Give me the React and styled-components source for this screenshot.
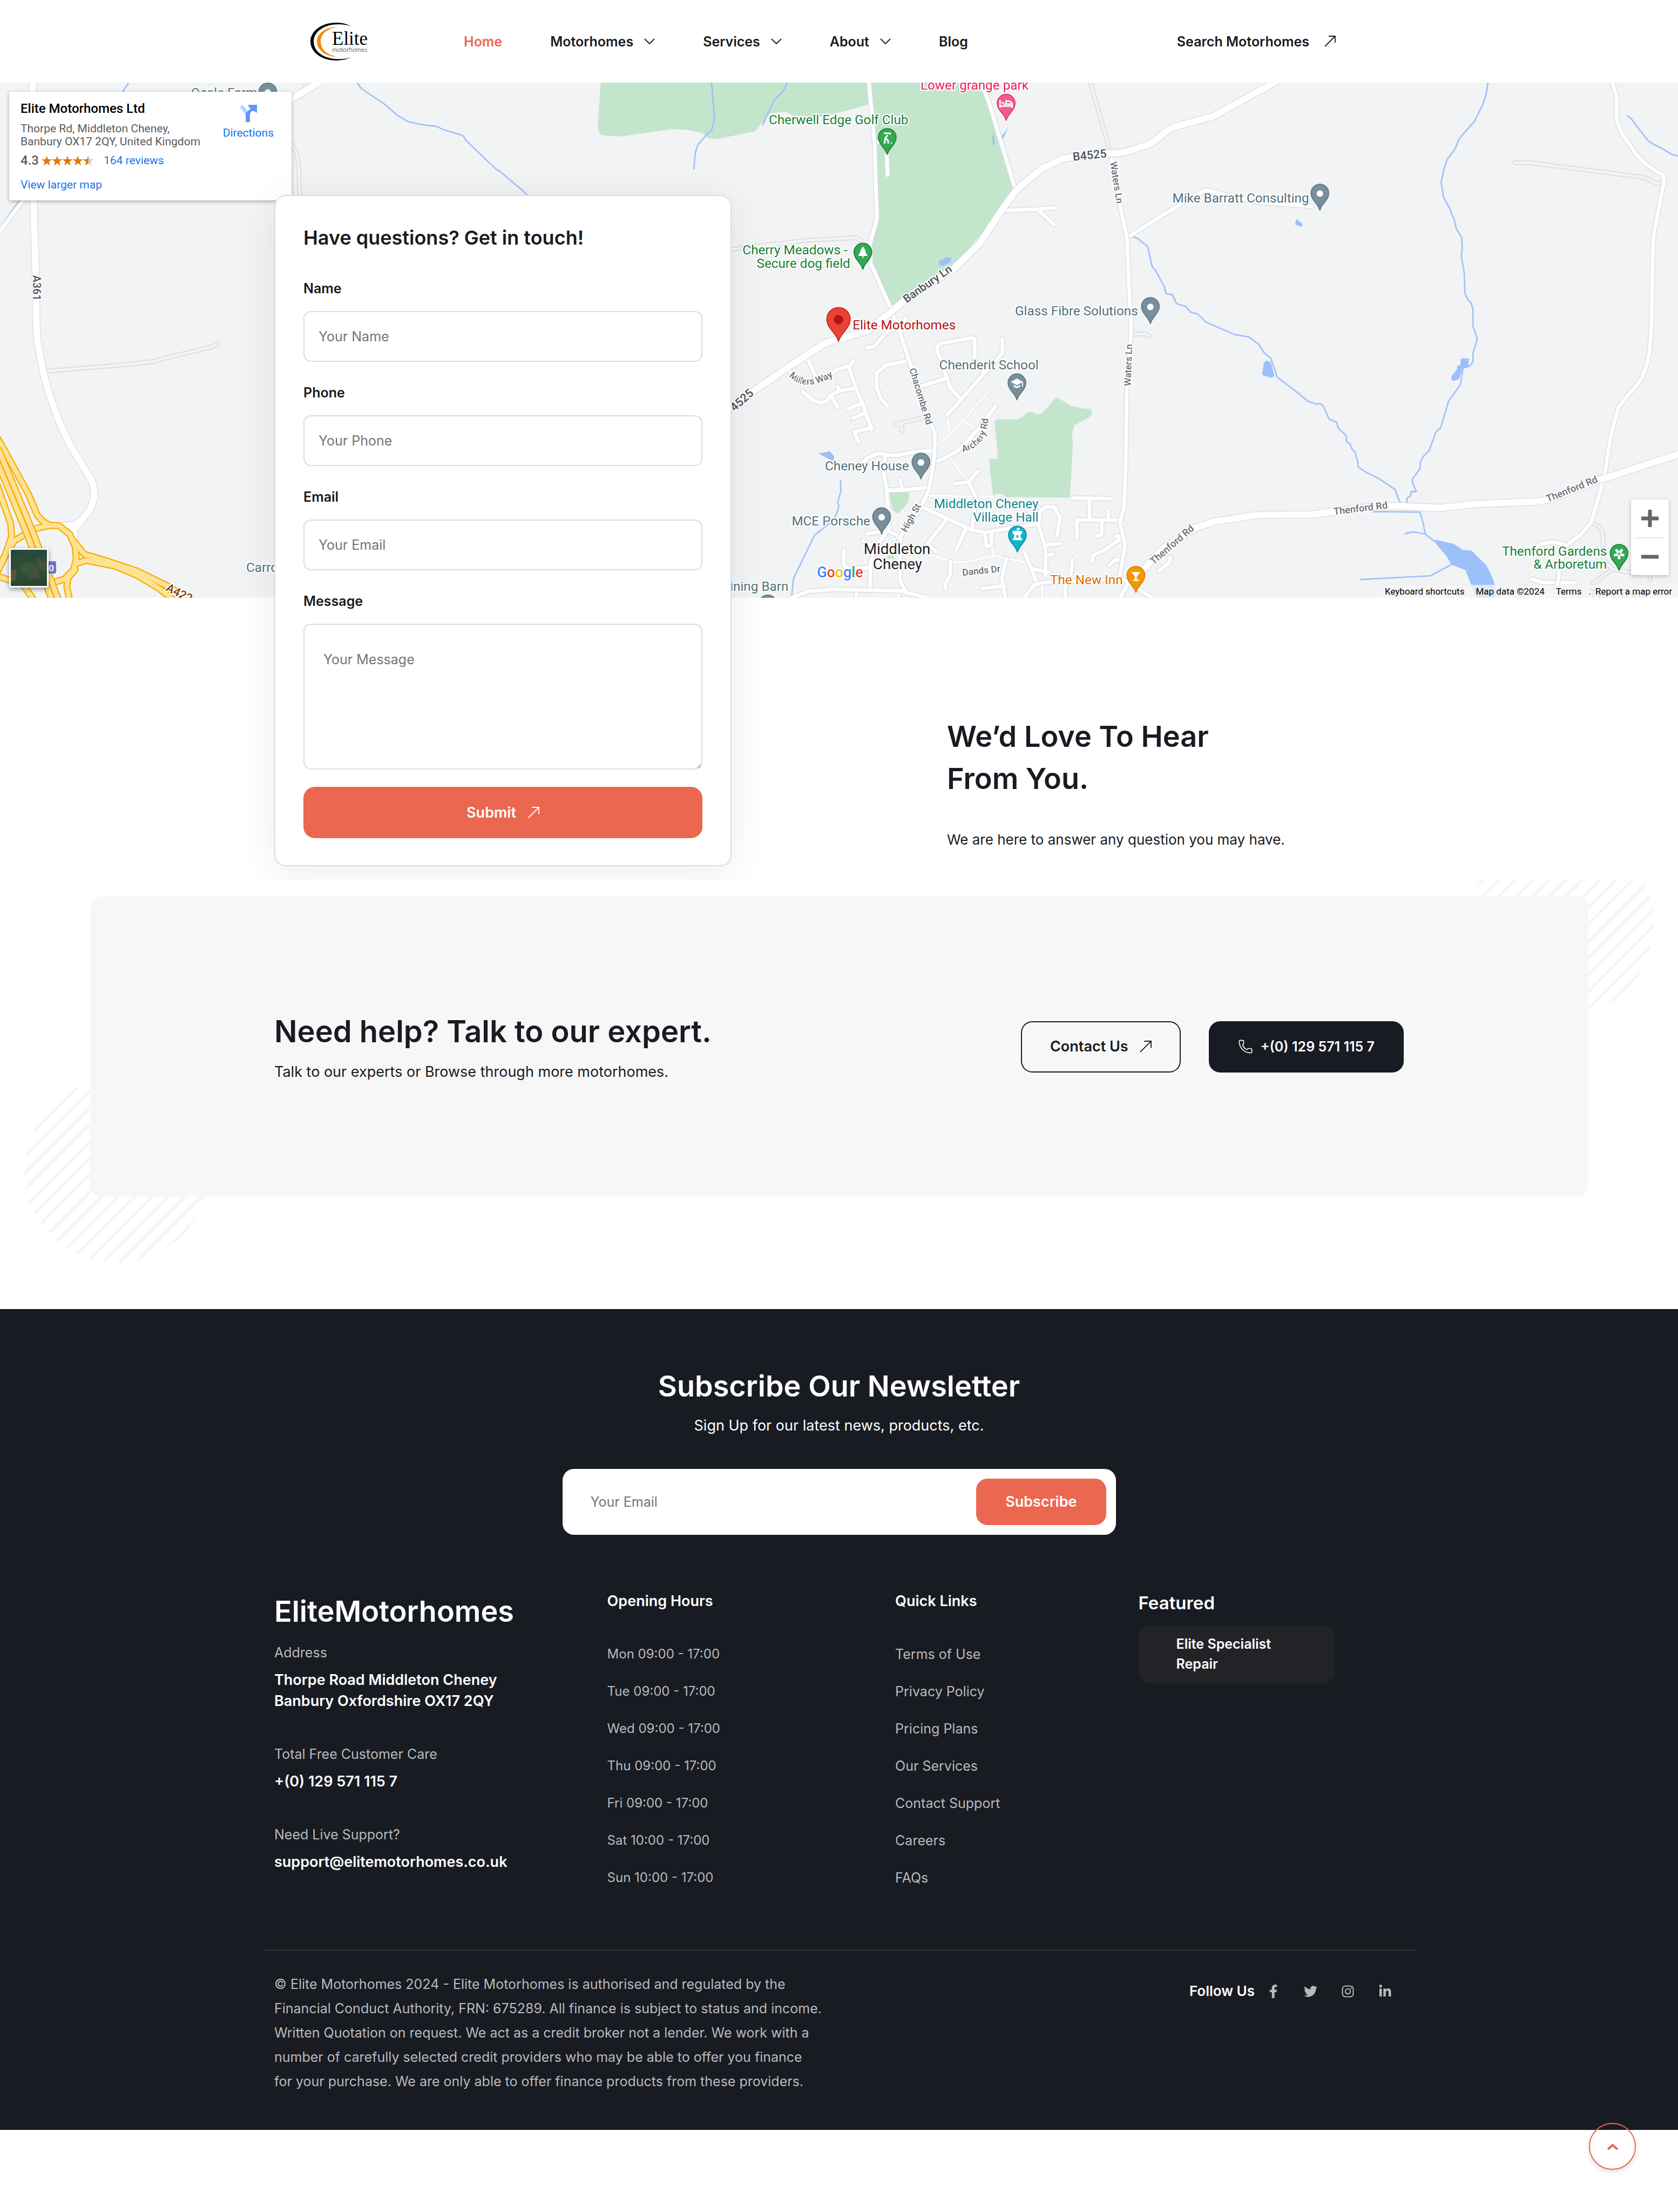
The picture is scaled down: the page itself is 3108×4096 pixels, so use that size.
import React from "react";
import styled, { createGlobalStyle, css } from "styled-components";
import { Phone } from "lucide-react";
import { FaFacebookF, FaTwitter, FaInstagram, FaLinkedinIn } from "react-icons/fa";

const ink = "#181b22";
const coral = "#ec6750";
const muted = "#b9babc";
const line = "#dcdcde";
const sans = `Inter, "Open Sans", sans-serif`;
const mapSans = `Roboto, "Liberation Sans", sans-serif`;

const GlobalStyle = createGlobalStyle`
  *, *::before, *::after { box-sizing: border-box; }
  body { margin: 0; background: #fff; color: ${ink}; font-family: ${sans}; font-size: 25px; line-height: 40px; }
  h1, h2, h3, h4, p, ul, dl, dd { margin: 0; padding: 0; }
  ul { list-style: none; }
  a { color: inherit; text-decoration: none; }
  button, input, textarea { font: inherit; color: inherit; }
  button { cursor: pointer; border: 0; }
`;

const Page = styled.div`
  min-height: 100vh;
`;

const Container = styled.div`
  width: 100%;
  max-width: 2136px;
  margin: 0 auto;
  padding: 0 22px;
`;

/* ---------- header ---------- */

const Header = styled.header`
  background: #fff;
`;

const HeaderBar = styled(Container)`
  display: flex;
  align-items: center;
  height: 153px;
  padding: 0 148px 0 89px;
`;

const LogoLink = styled.a`
  display: block;
  margin-right: 178px;
  svg { display: block; }
`;

const Nav = styled.nav`
  display: flex;
  gap: 89px;
`;

const NavLink = styled.a`
  display: inline-flex;
  align-items: center;
  gap: 20px;
  font-size: 25px;
  font-weight: 600;
  color: ${(p) => (p.$active ? coral : ink)};
`;

const SearchLink = styled.a`
  display: inline-flex;
  align-items: center;
  gap: 28px;
  margin-left: auto;
  font-weight: 600;
`;

/* ---------- contact + map ---------- */

const Contact = styled.section`
  display: grid;
  overflow: hidden;
`;

const MapFrame = styled.div`
  grid-area: 1 / 1;
  align-self: start;
  position: relative;
  height: 954px;
  overflow: hidden;
  background: #f1f3f4;
  font-family: ${mapSans};
`;

const MapCanvas = styled.svg`
  display: block;
  width: 100%;
  height: 100%;
  font-family: ${mapSans};
`;

const PlaceCard = styled.aside`
  position: absolute;
  top: 17px;
  left: 17px;
  display: flex;
  justify-content: space-between;
  width: 523px;
  height: 201px;
  padding: 16px 33px 10px 21px;
  background: #fff;
  border-radius: 3px;
  box-shadow: 0 2px 7px rgba(0, 0, 0, 0.3);
  font-size: 21px;
  line-height: 24px;
  color: #5b5b5b;
  a { color: #1a73e8; }
`;

const PlaceTitle = styled.h2`
  margin-bottom: 10px;
  font-size: 24px;
  line-height: 30px;
  font-weight: 500;
  color: #000;
`;

const Rating = styled.div`
  display: flex;
  align-items: center;
  gap: 5px;
  margin: 8px 0 18px;
  font-size: 24px;
  line-height: 30px;
  font-weight: 500;
  svg { display: block; }
  a { margin-left: 14px; font-size: 21px; font-weight: 400; }
`;

const Directions = styled.a`
  display: flex;
  flex-direction: column;
  align-items: center;
  align-self: flex-start;
  gap: 8px;
  padding-top: 8px;
`;

const Satellite = styled.button`
  position: absolute;
  left: 17px;
  bottom: 19px;
  width: 73px;
  height: 73px;
  padding: 0;
  border: 3px solid #fff;
  border-radius: 4px;
  overflow: hidden;
  box-shadow: 0 3px 8px rgba(0, 0, 0, 0.4);
  svg { display: block; }
`;

const ZoomBox = styled.div`
  position: absolute;
  right: 17px;
  bottom: 42px;
  display: flex;
  flex-direction: column;
  align-items: center;
  width: 70px;
  background: #fff;
  border-radius: 3px;
  box-shadow: 0 2px 7px rgba(0, 0, 0, 0.25);
`;

const ZoomButton = styled.button`
  display: grid;
  place-items: center;
  width: 52px;
  height: 70px;
  padding: 0;
  background: none;
  & + & { border-top: 2px solid #e6e6e6; }
`;

const Attribution = styled.div`
  position: absolute;
  right: 0;
  bottom: 0;
  display: flex;
  gap: 21px;
  padding: 0 11px;
  background: rgba(245, 245, 245, 0.75);
  font-size: 17px;
  line-height: 24px;
  color: #000;
`;

const ContactBody = styled(Container)`
  grid-area: 1 / 1;
  position: relative;
  display: flex;
  justify-content: space-between;
  align-items: flex-end;
  padding-top: 208px;
  padding-bottom: 26px;
  pointer-events: none;
  & > * { pointer-events: auto; }
`;

const FormCard = styled.form`
  width: 847px;
  padding: 50px 52px;
  background: #fff;
  border: 2px solid ${line};
  border-radius: 21px;
  box-shadow: 0 10px 70px rgba(0, 0, 0, 0.08);
`;

const FormTitle = styled.h1`
  margin-bottom: 47px;
  font-size: 36px;
  line-height: 54px;
  font-weight: 600;
`;

const Field = styled.div`
  margin-bottom: ${(p) => (p.$last ? 32 : 37)}px;
  label { display: block; margin-bottom: 22px; font-weight: 600; }
`;

const control = css`
  display: block;
  width: 100%;
  border: 2px solid ${line};
  border-radius: 14px;
  background: #fff;
  outline: 0;
  &::placeholder { color: #757575; opacity: 1; }
`;

const TextInput = styled.input`
  ${control}
  height: 94px;
  padding: 0 26px;
`;

const TextArea = styled.textarea`
  ${control}
  height: 270px;
  padding: 44px 35px;
`;

const Button = styled.button`
  display: inline-flex;
  align-items: center;
  justify-content: center;
  gap: ${(p) => p.$gap ?? 21}px;
  width: ${(p) => (p.$full ? "100%" : "auto")};
  height: ${(p) => p.$height ?? 95}px;
  padding: 0 ${(p) => p.$pad ?? 52}px;
  border: 2px solid ${(p) => (p.$kind === "coral" ? coral : ink)};
  border-radius: 21px;
  background: ${(p) => ({ coral, dark: ink, outline: "transparent" })[p.$kind]};
  color: ${(p) => (p.$kind === "outline" ? ink : "#fff")};
  font-size: ${(p) => p.$size ?? 27}px;
  font-weight: 600;
  white-space: nowrap;
`;

const Pitch = styled.div`
  width: 846px;
  padding-bottom: 29px;
`;

const Heading = styled.h2`
  font-size: ${(p) => p.$size ?? 54}px;
  line-height: 78px;
  font-weight: 600;
`;

const PitchText = styled.p`
  margin-top: 54px;
  font-size: 26px;
`;

/* ---------- help banner ---------- */

const Help = styled.section`
  position: relative;
  overflow: hidden;
  padding: 30px 167px 208px;
`;

const Stripes = styled.svg`
  position: absolute;
  width: 342px;
  height: 342px;
  ${(p) => (p.$side === "right" ? "top: -90px; right: 45px;" : "bottom: 85px; left: 45px;")}
`;

const HelpBox = styled.div`
  position: relative;
  display: flex;
  align-items: center;
  min-height: 556px;
  border-radius: 21px;
  background: #f7f7f7;
`;

const HelpRow = styled(Container)`
  display: flex;
  align-items: center;
  justify-content: space-between;
`;

const HelpText = styled.p`
  margin-top: 16px;
  font-size: 27px;
`;

const Actions = styled.div`
  display: flex;
  gap: 52px;
`;

/* ---------- footer ---------- */

const Footer = styled.footer`
  padding: 104px 0 67px;
  background: ${ink};
  color: #fff;
`;

const Newsletter = styled.div`
  display: flex;
  flex-direction: column;
  align-items: center;
  margin-bottom: 103px;
  p { margin-top: 14px; font-size: 27px; }
`;

const NewsletterForm = styled.form`
  display: flex;
  align-items: center;
  width: 1025px;
  max-width: 100%;
  height: 122px;
  margin-top: 60px;
  padding: 0 18px 0 52px;
  border-radius: 21px;
  background: #fff;
`;

const NewsletterInput = styled.input`
  flex: 1;
  min-width: 0;
  padding: 0;
  border: 0;
  outline: 0;
  background: none;
  color: ${ink};
  &::placeholder { color: #6c757d; opacity: 1; }
`;

const Columns = styled.div`
  display: grid;
  grid-template-columns: 616fr 533fr 450fr 491fr;
  align-items: start;
  padding-bottom: 113px;
`;

const Details = styled.dl`
  padding-top: 17px;
  dt { color: ${muted}; }
  dd { margin-top: 11px; font-size: 27px; line-height: 39px; font-weight: 600; }
  dd + dt { margin-top: 59px; }
`;

const ColumnTitle = styled.h3`
  font-size: 27px;
  line-height: 40px;
  font-weight: 600;
`;

const LinkList = styled.ul`
  display: grid;
  gap: 29px;
  margin-top: 58px;
  font-size: ${(p) => p.$size ?? 25}px;
  color: ${muted};
`;

const FeaturedTitle = styled.h3`
  margin-bottom: 18px;
  font-size: 33px;
  line-height: 46px;
  font-weight: 600;
`;

const FeaturedCard = styled.a`
  display: block;
  width: 364px;
  padding: 17px 70px;
  border-radius: 21px;
  background: #222327;
  line-height: 37px;
  font-weight: 600;
`;

const Rule = styled.div`
  max-width: 2136px;
  margin: 0 auto;
  border-top: 2px solid #2f3136;
`;

const Legal = styled(Container)`
  display: flex;
  justify-content: space-between;
  align-items: flex-start;
  padding-top: 40px;
`;

const Copyright = styled.p`
  line-height: 45px;
  color: ${muted};
`;

const Follow = styled.div`
  display: flex;
  align-items: center;
  margin-top: 15px;
  font-size: 26px;
  font-weight: 600;
`;

const Social = styled.a`
  display: grid;
  place-items: center;
  width: 69px;
  height: 40px;
  color: ${muted};
`;

const ToTop = styled.a`
  position: fixed;
  right: 78px;
  bottom: 78px;
  display: grid;
  place-items: center;
  width: 87px;
  height: 87px;
  border: 2px solid ${coral};
  border-radius: 50%;
  box-shadow: 0 4px 8px rgba(60, 60, 120, 0.18);
`;

/* ---------- icons ---------- */

const Arrow = ({ size = 21 }) => (
  <svg width={size} height={size} viewBox="0 0 21 21" fill="none" stroke="currentColor" strokeWidth="1.8" aria-hidden="true">
    <path d="M1 20L20 1M8 1H20V13" />
  </svg>
);

const Chevron = () => (
  <svg width="20" height="11" viewBox="0 0 20 11" fill="none" stroke="currentColor" strokeWidth="1.8" aria-hidden="true">
    <path d="M1 1L10 10L19 1" />
  </svg>
);

const Logo = () => (
  <svg width="106" height="70" viewBox="0 0 106 70" role="img" aria-label="Elite motorhomes">
    <path d="M76 7C66 1 56 0 48 0C20 0 0 16 0 35S20 70 48 70C58 70 68 68 76 63C68 67 60 67.500 52 67.500C26 67.500 6 54 6 35S26 3 52 3C60 3 69 4 76 7Z" fill="#000" />
    <path d="M49 8C28 8 12 20 12 35S28 63 49 63C32 60 19 50 19 35S32 11 49 8Z" fill="#f28c0a" />
    <text x="40" y="41" fontFamily="Liberation Serif, serif" fontSize="35" fill="#000">Elite</text>
    <text x="40" y="54" fontFamily="Lato, sans-serif" fontWeight="300" fontSize="12" fill="#000">motorhomes</text>
  </svg>
);

const starPath = "M10 0L12.400 7H20L14 11.500L16.200 19L10 14.500L3.800 19L6 11.500L0 7H7.600Z";
const Stars = () => (
  <svg width="96" height="19" viewBox="0 0 100 19" aria-label="4.3 out of 5 stars">
    {[0, 1, 2, 3, 4].map((i) => (
      <g key={i} transform={`translate(${i * 20} 0)`}>
        <path d={starPath} fill={i < 4 ? "#e77600" : "#ccc"} />
        {i === 4 && <path d="M10 0V14.500L3.800 19L6 11.500L0 7H7.600Z" fill="#e77600" />}
      </g>
    ))}
  </svg>
);

const DirectionsIcon = () => (
  <svg width="32" height="32" viewBox="0 0 32 32" aria-hidden="true">
    <path d="M0 4L5 0L16 13L11 19Z" fill="#b8d0fe" />
    <path d="M11 32V20C11 14 14 12 20 8L16 2V0H32V15L29 13L24 11C19 15 19 16 19 20V32Z" fill="#6296f8" />
  </svg>
);

const SatelliteImage = () => (
  <svg width="67" height="67" viewBox="0 0 67 67" aria-hidden="true">
    <rect width="67" height="67" fill="#2f4d36" />
    <path d="M0 0H67V12L40 18L18 12L0 18Z" fill="#28493c" />
    <path d="M18 28L40 22L50 34L38 48L22 44Z" fill="#38573a" />
    <path d="M46 14L67 24V40L52 36Z" fill="#41553a" />
    <path d="M0 38L10 36L9 56L0 58Z" fill="#5d5540" />
    <path d="M30 38L52 34V52L34 54Z" fill="#464c40" />
    <path d="M0 60L67 54V67H0Z" fill="#2b4531" />
  </svg>
);

/* ---------- map drawing ---------- */

// The map is charted on a 3 × 2 sheet grid; each sheet has 1568 × 1568 units
// and covers 1200 × 700 of the drawing.
const sheets = { A: [0, 0], B: [1200, 0], C: [2384, 0], D: [0, 600], E: [1200, 600], F: [2384, 600] };
const at = (sheet, x, y) => [
  Math.round(sheets[sheet][0] + (x * 1200) / 1568),
  Math.round(sheets[sheet][1] + (y * 700) / 1568),
];
const trace = (spec) => {
  let sheet = "A";
  const pts = [];
  spec.split(" ").forEach((t) => {
    if (sheets[t]) sheet = t;
    else pts.push(at(sheet, ...t.split(",").map(Number)).join(" "));
  });
  return "M" + pts.join("L");
};

const parks = [
  "B 108,394 100,600 103,630 110,645 165,652 310,616 350,620 390,635 410,660 435,664 540,627 552,600 580,543 625,532 645,550 700,565 760,545 857,498 855,394",
  "B 862,394 1170,394 1265,900 1230,1000 1150,1160 1090,1290 980,1390 920,1470 885,1370 862,1260 865,1150 880,1045 870,600",
  "E 1208,670 1215,660 1270,660 1285,650 1300,628 1310,625 1325,637 1340,632 1358,600 1375,562 1385,558 1395,570 1420,595 1450,608 1475,612 1480,635 1470,655 1430,690 1423,735 1427,770 1418,1030 1412,1035 1240,1033 1232,1020 1212,1018 1204,1025 1192,852 1218,848",
  "E 914,1010 968,1010 970,1040 960,1070 938,1110 922,1095",
  "E 908,1312 928,1312 928,1328 908,1328",
];
const ponds = [
  "B 1202,640 1208,655 1209,690 1202,692",
  "B 1246,606 1230,668 1226,655",
  "B 1053,1245 1075,1229 1087,1233 1086,1250 1063,1272 1053,1265",
  "C 503,1046 520,1070 519,1083 512,1082 499,1073",
  "F 419,379 431,387 442,455 433,462 407,447 413,388",
  "F 962,370 984,370 983,410 965,420 958,465 944,476 935,472 935,455 951,420 951,405 960,400",
  "E 716,825 748,814 760,837 758,857 750,855",
  "F 892,1236 942,1257 968,1285 992,1287 1033,1360 1050,1420 1060,1470 1057,1514 1005,1514 975,1382 936,1355 922,1318 889,1247",
];
const streams = [
  "A 359,394 342,440",
  "A 54,958 0,1090",
  "A 896,394 836,468",
  "A 997,394 1009,423 1075,500 1110,550 1138,580 1165,592 1190,598 1217,603 1240,620 1280,640 1293,650 1300,670 1370,785 1385,808 1398,822 1430,870 1458,910 1500,980",
  "B 418,394 426,560 420,615 380,690 373,730 368,808",
  "B 629,394 618,435 595,475 570,560 560,597",
  "C 1038,394 1032,450 1023,500 1000,580 965,645 957,665 946,710 924,762 916,800 907,870 913,940 932,1000 935,1020 944,1050 948,1090 964,1135 966,1190 963,1225 971,1300 973,1405 982,1435 990,1448 996,1480 F 996,215 1007,275 996,345 996,385 985,408 968,415 960,495 928,573 905,700 893,722 873,810 856,840 848,870 848,895 827,945 827,965 838,1005 823,1005 822,1027 812,1037 812,1055 806,1070",
  "C 46,1132 60,1140 87,1178 100,1275 110,1292 135,1370 139,1402 157,1410 168,1452 195,1466 208,1492 228,1500 F 250,195 330,255 370,267 397,300 413,343 431,368 449,460 510,538 535,573 560,590 570,585 578,595 594,660 616,674 620,700 641,740 643,765 652,778 657,800 666,818 674,865 676,890 698,915 732,942 778,995 791,1052 798,1068",
  "C 1426,550 1437,567 1455,610 1485,672 1497,688 1520,706 1550,736 1568,745",
  "F 715,1103 848,1105 857,1160 862,1210 890,1245",
  "F 805,1208 828,1198 862,1210",
  "F 936,1355 877,1410 680,1427",
  "E 777,950 779,1003 769,1060 774,1075 760,1140 705,1215 647,1420 641,1505",
];
const tracks = [
  "A 814,690 830,740 834,800 838,960",
  "A 848,394 858,420",
  "D 130,430 370,397 430,383 465,365 540,337 596,312 607,297",
  "B 473,1192 550,1175 680,1148 820,1136 835,1150",
  "B 1475,394 1530,725",
  "C 1112,777 1155,777 1470,847 1485,855 1505,873 1525,877",
  "F 1325,1155 1345,1170 1358,1200 1360,1330 1382,1372",
  "F 1330,1445 1385,1378 1455,1400",
  "F 45,255 80,250 93,263",
  "F 1490,1400 1490,1430",
  "E 1015,650 932,685",
  "E 945,680 950,715",
];
const lanes = [
  "E 625,410 645,450 680,485 720,480 770,420 803,405 813,380",
  "E 683,360 710,460",
  "E 800,405 820,510 840,590 865,710",
  "E 820,510 775,525 750,545 738,575 720,582 700,570 672,527",
  "E 770,503 775,525",
  "E 750,545 770,602",
  "E 838,583 798,612",
  "E 845,630 813,657",
  "E 865,700 815,722 828,768",
  "E 850,318 872,312 910,240 945,215 960,175",
  "E 968,380 905,402 878,440 880,510 890,560 910,598",
  "E 1180,440 1153,380 1153,275 1145,270 1055,298 1045,320 1085,510 1110,555",
  "E 1230,275 1230,345 1180,440 1075,640",
  "E 1070,465 1000,505",
  "E 1210,597 1165,700 1105,810 1055,858 1037,858",
  "E 1040,800 1030,810 985,815 935,833 905,830 885,823 855,845 830,880",
  "E 903,835 897,900 907,1000 910,1080 912,1190 880,1260 862,1340 860,1480",
  "E 907,1000 950,1000 1025,985",
  "E 945,950 950,1000",
  "E 1162,910 1135,962 1095,967",
  "E 1135,962 1155,1030 1145,1190",
  "E 1000,1075 1145,1190 1180,1200 1330,1160 1335,1100 1350,1080 1375,1080 1390,1130 1383,1215",
  "E 1075,1135 1020,1255 1045,1295",
  "E 1128,1180 1100,1285",
  "E 1180,1200 1185,1270 1200,1260 1200,1200",
  "E 1330,1160 1350,1280 1350,1410",
  "E 1350,1260 1392,1255",
  "E 1370,1305 1355,1310",
  "E 1425,1037 1530,1040",
  "E 1473,1040 1473,1143",
  "E 1437,1230 1437,1143 1550,1143 1568,1160",
  "E 1525,1100 1525,1143",
  "E 1507,1150 1507,1215 1490,1218",
  "E 1480,1340 1482,1310 1510,1290 1568,1220",
  "E 1528,1360 1545,1330 1568,1335",
  "E 850,1208 910,1195 935,1215 943,1240",
  "E 840,1240 870,1265",
  "E 787,1285 787,1355 797,1372 860,1370",
  "E 823,1480 820,1514",
  "E 940,1480 940,1514",
  "E 1240,1325 1228,1420 1237,1514",
  "E 1175,1470 1235,1455",
  "E 1290,1290 1310,1375 1325,1440",
  "E 1310,1375 1360,1390",
  "E 1085,1340 1085,1400 1070,1450 1070,1470",
  "E 1405,1440 1405,1514",
  "E 1425,1330 1420,1400",
  "B 1235,1005 1330,999 1378,993",
  "B 1330,1003 1373,1072",
  "B 907,740 909,835",
  "B 870,680 890,678",
  "C 30,1135 190,965 248,908 390,965 545,985",
  "F 1175,1268 1187,1257 1220,1248 1255,1258",
  "F 1160,1425 1190,1440 1280,1443",
  "F 150,1320 150,1345 120,1385",
  "F 0,1335 10,1335",
  "F 0,1220 20,1215",
];
const paths = [
  "E 1190,528 1120,665 1045,790",
  "E 1120,665 1160,715",
  "E 1075,640 1080,720",
  "E 1085,845 1105,895 1135,960",
  "E 1020,1025 1200,1030 1215,1050 1215,1185",
  "E 1035,1310 1090,1345 1120,1345 1210,1312 1240,1325 1310,1350",
  "E 1200,1260 1205,1312",
  "E 1340,1440 1340,1514",
];
const roads = [
  "B 857,394 873,690 880,1045 860,1165 862,1260 920,1480 E 920,140 945,250 970,380 1000,530 1030,680 1042,730 1042,800 1037,870 1025,1000 1000,1090 945,1220 943,1430 960,1490",
  "B 1170,394 1190,480 1265,900",
  "B 1532,735 C 10,980 30,1135 38,1450 42,1568 F 43,150 40,270 30,500 26,900 22,1080 10,1150 25,1260 10,1410",
  "C 1385,394 1395,460 1397,500 1395,545 1400,590 1412,640 1450,735 1475,780 1500,810 1525,835 1530,860 1525,900 1500,1120 1497,1200 1493,1568 F 1488,340 1480,400 1465,470 1402,600 1380,740 1365,900 1350,1010 1325,1155 1295,1215 1255,1265 1240,1350 1225,1514",
  "E 640,1514 690,1483 760,1475 945,1480 1020,1514",
  "E 1290,1514 1320,1450 1350,1440 F 20,1425 100,1514",
  "F 35,1440 10,1514",
  "A 64,958 0,1105",
];
const mainRoads = [
  "A 890,394 810,475",
  "A 92,394 94,960 100,1375 D 102,224 104,280 120,430 136,530 165,670 195,780 255,950 262,990 262,1040 252,1090 228,1145 210,1165 170,1172",
  "D 228,1145 205,1190 208,1240",
  "E 440,650 530,530 640,400 735,295 850,240 920,145 B 960,1430 1090,1290 1165,1165 1230,1000 1270,905 1340,805 1395,760 1440,745 1568,728 C 30,724 80,697 100,680 145,620 165,605 270,555 446,390",
  "F 60,1410 130,1280 220,1180 275,1150 395,1117 550,1115 620,1098 710,1080 780,1075 905,1085 1000,1067 1185,1052 1230,1030 1340,955 1568,828",
];
const trunks = [
  "D -10,740 20,830 80,1020 105,1120 120,1150 140,1170",
  "D -10,960 30,1160 33,1220 15,1310 -10,1390",
  "D -10,1400 20,1300 40,1240 95,1185 140,1168 165,1170 195,1210 210,1270 213,1330 205,1380 180,1425 150,1440",
  "D -10,1410 30,1432 60,1440 97,1530",
  "D 210,1380 190,1420 187,1460 195,1530",
  "D 205,1240 235,1305 300,1340 380,1385 470,1460 540,1530",
  "D 213,1350 240,1335 320,1362 380,1405 440,1465 490,1530",
];
const motorway = "D -10,815 30,980 85,1210 155,1530";

const Lines = ({ items, casing, fill, outer, inner }) => (
  <g fill="none" strokeLinecap="round" strokeLinejoin="round">
    <g stroke={casing} strokeWidth={outer}>{items.map((d) => <path key={d} d={trace(d)} />)}</g>
    <g stroke={fill} strokeWidth={inner}>{items.map((d) => <path key={d} d={trace(d)} />)}</g>
  </g>
);

const glyphs = {
  dot: <ellipse cx="0" cy="-36" rx="7" ry="7" fill="#fff" />,
  bed: <path d="M-13 -44V-27M-13 -31H13M13 -27V-36M-6 -35H12V-37Q10 -42 0 -42V-35M-10 -38H-5" stroke="#fff" strokeWidth="3" fill="none" />,
  golf: <path d="M-7 -46H6V-43M1 -42L-4 -36L2 -30V-24M-4 -36L-6 -24M8 -25H10" stroke="#fff" strokeWidth="3.500" fill="none" />,
  tree: <path d="M0 -49L6 -40H4L10 -29H1V-24H-1V-29H-10L-4 -40H-6Z" fill="#fff" />,
  school: <path d="M0 -46L13 -39L0 -32L-13 -39ZM-7 -33V-29Q0 -23 7 -29V-33L0 -29ZM11 -38H13V-29H11Z" fill="#fff" />,
  castle: <path d="M-1 -52H5V-48H1V-46H10V-39H7V-30H10V-26H-10V-30H-7V-39H-10V-46H-1ZM-2 -31H2V-37H-2Z" fill="#fff" fillRule="evenodd" />,
  glass: <path d="M-10 -44H10L2 -35V-28H6V-25H-6V-28H-2V-35L-10 -44Z" fill="#fff" />,
  flower: (
    <g fill="#fff">
      {[0, 72, 144, 216, 288].map((a) => <ellipse key={a} cx="0" cy="-43" rx="3" ry="5" transform={`rotate(${a + 36} 0 -36)`} />)}
    </g>
  ),
};

const pins = [
  ["A", 748, 522, "#78909c", "#5c7783", "dot"],
  ["B", 908, 740, "#34a853", "#188038", "golf"],
  ["B", 840, 1287, "#34a853", "#188038", "tree"],
  ["B", 1240, 575, "#f25c8f", "#e22f6c", "bed"],
  ["C", 569, 1006, "#78909c", "#5c7783", "dot"],
  ["C", 96, 1547, "#78909c", "#5c7783", "dot"],
  ["E", 1270, 568, "#78909c", "#5c7783", "school"],
  ["E", 1002, 947, "#78909c", "#5c7783", "dot"],
  ["E", 893, 1209, "#78909c", "#5c7783", "dot"],
  ["E", 1272, 1296, "#12b5cb", "#0d8f9f", "castle"],
  ["E", 575, 1627, "#78909c", "#5c7783", "dot"],
  ["F", 55, 1489, "#f29900", "#dd7e00", "glass"],
  ["F", 1404, 1384, "#34a853", "#188038", "flower"],
];

const slate = "#56707c";
const green = "#188038";
const teal = "#0f8591";
const places = [
  ["A", 533, 463, "Ocale Farm", slate],
  ["D", 687, 1391, "Carrolls Farm", slate],
  ["B", 1001, 428, "Lower grange park", "#e91e63"],
  ["B", 578, 594, "Cherwell Edge Golf Club", green],
  ["B", 505, 1216, "Cherry Meadows -", green],
  ["B", 805, 1278, "Secure dog field", green, "end"],
  ["E", 812, 231, "Elite Motorhomes", "#b31412"],
  ["B", 1265, 1508, "Glass Fibre Solutions", slate],
  ["C", 157, 967, "Mike Barratt Consulting", slate],
  ["E", 1053, 420, "Chenderit School", slate],
  ["E", 734, 906, "Cheney House", slate],
  ["E", 642, 1168, "MCE Porsche", slate],
  ["E", 1330, 1086, "Middleton Cheney", teal, "end"],
  ["E", 1330, 1148, "Village Hall", teal, "end"],
  ["E", 935, 1305, "Middleton", "#202124", "middle", 32],
  ["E", 937, 1378, "Cheney", "#202124", "middle", 32],
  ["F", 18, 1449, "The New Inn", "#d56e0c", "end"],
  ["E", 633, 1480, "Dining Barn", slate, "end"],
  ["F", 1369, 1312, "Thenford Gardens", green, "end"],
  ["F", 1369, 1375, "& Arboretum", green, "end"],
  ["F", 1320, 1524, "Thenford", "#a9abae", "start", 30],
];

const road = "#6a6e73";
const roadLabels = [
  ["A", 92, 1315, 90, "A361", 23, "#4d5156"],
  ["B", 1427, 768, -6, "B4525", 25, "#4d5156"],
  ["B", 1530, 775, 81, "Waters Ln", 20, road],
  ["F", 41, 501, -88, "Waters Ln", 20, road],
  ["B", 962, 1450, -35, "Banbury Ln", 24, "#4d5156"],
  ["E", 482, 626, -42, "4525", 25, "#4d5156"],
  ["E", 970, 420, 73, "Chacombe Rd", 20, road],
  ["E", 962, 1203, -61, "High St", 20, road],
  ["E", 1118, 1408, -6, "Dands Dr", 20, road],
  ["F", 105, 1357, -41, "Thenford Rd", 21, road],
  ["F", 607, 1118, -7, "Thenford Rd", 21, road],
  ["F", 1205, 1058, -22, "Thenford Rd", 21, road],
  ["D", 461, 1478, 27, "A422", 25, "#783f04"],
];

const halo = { stroke: "#fff", strokeWidth: 5, strokeLinejoin: "round", paintOrder: "stroke" };
const pinShape = "M0 0C-2 -13 -19 -22 -19 -37A19 19 0 0 1 19 -37C19 -22 2 -13 0 0Z";
const googleLetters = [["G", "#4285f4"], ["o", "#ea4335"], ["o", "#fbbc04"], ["g", "#4285f4"], ["l", "#34a853"], ["e", "#ea4335"]];

function MapDrawing() {
  const [rx, ry] = at("E", 772, 290);
  const [gx, gy] = at("E", 712, 1416);
  return (
    <MapCanvas viewBox="0 176 3584 1100" preserveAspectRatio="xMidYMid slice" role="img" aria-label="Map of Middleton Cheney">
      <rect y="176" width="3584" height="1100" fill="#f1f3f4" />
      <g fill="#c3e5cb">{parks.map((d) => <path key={d} d={trace(d) + "Z"} />)}</g>
      <g fill="#9cc0f9">{ponds.map((d) => <path key={d} d={trace(d) + "Z"} />)}</g>
      <g fill="none" stroke="#9cc0f9" strokeWidth="3" strokeLinejoin="round">{streams.map((d) => <path key={d} d={trace(d)} />)}</g>
      <Lines items={tracks} casing="#dadce0" fill="#f1f3f4" outer={10} inner={6} />
      <Lines items={paths} casing="#e4e6e8" fill="#fff" outer={6} inner={4} />
      <Lines items={lanes} casing="#dadce2" fill="#fff" outer={11} inner={8} />
      <Lines items={roads} casing="#dadce0" fill="#fff" outer={11} inner={8} />
      <Lines items={mainRoads} casing="#dadce0" fill="#fff" outer={17} inner={14} />
      <Lines items={trunks} casing="#f9ab00" fill="#fde293" outer={15} inner={10} />
      <Lines items={[motorway]} casing="#f9ab00" fill="#fde293" outer={28} inner={23} />
      <path d={trace(motorway)} fill="none" stroke="#f9ab00" strokeWidth="3" />
      <rect x="88" y="1198" width="32" height="26" rx="4" fill="#6f6fc8" />
      <text x="104" y="1219" fontSize="20" fontWeight="700" fill="#fff">0</text>

      <defs>
        <path id="millers" d={`M${at("E", 634, 452)}Q${at("E", 680, 545)} ${at("E", 775, 436)}`} />
        <path id="archery" d={`M${at("E", 1118, 818)}Q${at("E", 1190, 790)} ${at("E", 1190, 640)}`} />
      </defs>
      <g {...halo} fill={road} fontSize="20" fontWeight="500">
        <text><textPath href="#millers">Millers Way</textPath></text>
        <text><textPath href="#archery">Archery Rd</textPath></text>
      </g>
      {roadLabels.map(([s, x, y, angle, text, size, fill]) => {
        const [px, py] = at(s, x, y);
        return (
          <text key={s + x} transform={`translate(${px} ${py}) rotate(${angle})`} fontSize={size} fontWeight="500" fill={fill} {...halo}>{text}</text>
        );
      })}
      {places.map(([s, x, y, text, fill, anchor = "start", size = 28]) => {
        const [px, py] = at(s, x, y);
        return (
          <text key={s + x + text} x={px} y={py} fontSize={size} fill={fill} textAnchor={anchor} {...halo}>{text}</text>
        );
      })}
      {pins.map(([s, x, y, fill, edge, glyph]) => (
        <g key={s + x} transform={`translate(${at(s, x, y).join(" ")})`}>
          <path d={pinShape} fill={fill} stroke={edge} strokeWidth="2" />
          {glyphs[glyph]}
        </g>
      ))}
      <g transform={`translate(${rx} ${ry})`}>
        <path d="M0 0C-3 -17 -25 -28 -25 -48A25 25 0 0 1 25 -48C25 -28 3 -17 0 0Z" fill="#ea4335" stroke="#c5221f" strokeWidth="2" />
        <circle cx="0" cy="-47" r="10" fill="#b31412" />
      </g>
      <text x={gx} y={gy} fontSize="31" fontWeight="500" {...halo}>
        {googleLetters.map(([c, fill], i) => <tspan key={i} fill={fill}>{c}</tspan>)}
      </text>
    </MapCanvas>
  );
}

const StripedCircle = ({ side }) => (
  <Stripes $side={side} viewBox="0 0 342 342" aria-hidden="true">
    <defs>
      <clipPath id={`disc-${side}`}><circle cx="171" cy="171" r="171" /></clipPath>
    </defs>
    <g clipPath={`url(#disc-${side})`} stroke="#f6f6f6" strokeWidth="6">
      {Array.from({ length: 22 }, (_, i) => (
        <path key={i} d={`M${i * 31 - 10} 0L${i * 31 - 352} 342`} />
      ))}
    </g>
  </Stripes>
);

/* ---------- content ---------- */

const menu = [
  { label: "Home", active: true },
  { label: "Motorhomes", more: true },
  { label: "Services", more: true },
  { label: "About", more: true },
  { label: "Blog" },
];
const hours = ["Mon 09:00 - 17:00", "Tue 09:00 - 17:00", "Wed 09:00 - 17:00", "Thu 09:00 - 17:00", "Fri 09:00 - 17:00", "Sat 10:00 - 17:00", "Sun 10:00 - 17:00"];
const links = ["Terms of Use", "Privacy Policy", "Pricing Plans", "Our Services", "Contact Support", "Careers", "FAQs"];
const socials = [["Facebook", FaFacebookF], ["Twitter", FaTwitter], ["Instagram", FaInstagram], ["LinkedIn", FaLinkedinIn]];

export default function App() {
  return (
    <Page>
      <GlobalStyle />
      <Header>
        <HeaderBar>
          <LogoLink href="#"><Logo /></LogoLink>
          <Nav>
            {menu.map((m) => (
              <NavLink key={m.label} href="#" $active={m.active}>
                {m.label}
                {m.more && <Chevron />}
              </NavLink>
            ))}
          </Nav>
          <SearchLink href="#">Search Motorhomes <Arrow /></SearchLink>
        </HeaderBar>
      </Header>

      <Contact>
        <MapFrame>
          <MapDrawing />
          <PlaceCard>
            <div>
              <PlaceTitle>Elite Motorhomes Ltd</PlaceTitle>
              <p>Thorpe Rd, Middleton Cheney,<br />Banbury OX17 2QY, United Kingdom</p>
              <Rating>4.3 <Stars /> <a href="#">164 reviews</a></Rating>
              <a href="#">View larger map</a>
            </div>
            <Directions href="#"><DirectionsIcon />Directions</Directions>
          </PlaceCard>
          <Satellite type="button" aria-label="Show satellite imagery"><SatelliteImage /></Satellite>
          <ZoomBox>
            <ZoomButton type="button" aria-label="Zoom in">
              <svg width="32" height="32" viewBox="0 0 32 32" stroke="#666" strokeWidth="7"><path d="M16 0V32M0 16H32" /></svg>
            </ZoomButton>
            <ZoomButton type="button" aria-label="Zoom out">
              <svg width="32" height="32" viewBox="0 0 32 32" stroke="#666" strokeWidth="7"><path d="M0 16H32" /></svg>
            </ZoomButton>
          </ZoomBox>
          <Attribution>
            <span>Keyboard shortcuts</span>
            <span>Map data ©2024</span>
            <span>Terms&nbsp;&nbsp; . &nbsp;Report a map error</span>
          </Attribution>
        </MapFrame>

        <ContactBody>
          <FormCard>
            <FormTitle>Have questions? Get in touch!</FormTitle>
            <Field>
              <label htmlFor="name">Name</label>
              <TextInput id="name" type="text" placeholder="Your Name" />
            </Field>
            <Field>
              <label htmlFor="phone">Phone</label>
              <TextInput id="phone" type="tel" placeholder="Your Phone" />
            </Field>
            <Field>
              <label htmlFor="email">Email</label>
              <TextInput id="email" type="email" placeholder="Your Email" />
            </Field>
            <Field $last>
              <label htmlFor="message">Message</label>
              <TextArea id="message" placeholder="Your Message" />
            </Field>
            <Button type="submit" $kind="coral" $full>Submit <Arrow size={22} /></Button>
          </FormCard>
          <Pitch>
            <Heading>We’d Love To Hear<br />From You.</Heading>
            <PitchText>We are here to answer any question you may have.</PitchText>
          </Pitch>
        </ContactBody>
      </Contact>

      <Help>
        <StripedCircle side="right" />
        <StripedCircle side="left" />
        <HelpBox>
          <HelpRow>
            <div>
              <Heading $size={56}>Need help? Talk to our expert.</Heading>
              <HelpText>Talk to our experts or Browse through more motorhomes.</HelpText>
            </div>
            <Actions>
              <Button as="a" href="#" $kind="outline">Contact Us <Arrow size={22} /></Button>
              <Button as="a" href="#" $kind="dark" $gap={14} $size={25}>
                <Phone size={28} strokeWidth={1.4} aria-hidden="true" /> +(0) 129 571 115 7
              </Button>
            </Actions>
          </HelpRow>
        </HelpBox>
      </Help>

      <Footer>
        <Container>
          <Newsletter>
            <Heading>Subscribe Our Newsletter</Heading>
            <p>Sign Up for our latest news, products, etc.</p>
            <NewsletterForm>
              <NewsletterInput type="email" placeholder="Your Email" aria-label="Your Email" />
              <Button type="submit" $kind="coral" $height={86}>Subscribe</Button>
            </NewsletterForm>
          </Newsletter>
          <Columns>
            <div>
              <Heading>EliteMotorhomes</Heading>
              <Details>
                <dt>Address</dt>
                <dd>Thorpe Road Middleton Cheney<br />Banbury Oxfordshire OX17 2QY</dd>
                <dt>Total Free Customer Care</dt>
                <dd><a href="#">+(0) 129 571 115 7</a></dd>
                <dt>Need Live Support?</dt>
                <dd><a href="#">support@elitemotorhomes.co.uk</a></dd>
              </Details>
            </div>
            <div>
              <ColumnTitle>Opening Hours</ColumnTitle>
              <LinkList $size={24}>{hours.map((h) => <li key={h}>{h}</li>)}</LinkList>
            </div>
            <div>
              <ColumnTitle>Quick Links</ColumnTitle>
              <LinkList>{links.map((l) => <li key={l}><a href="#">{l}</a></li>)}</LinkList>
            </div>
            <div>
              <FeaturedTitle>Featured</FeaturedTitle>
              <FeaturedCard href="#">Elite Specialist<br />Repair</FeaturedCard>
            </div>
          </Columns>
        </Container>
        <Rule />
        <Legal>
          <Copyright>
            © Elite Motorhomes 2024 - Elite Motorhomes is authorised and regulated by the<br />
            Financial Conduct Authority, FRN: 675289. All finance is subject to status and income.<br />
            Written Quotation on request. We act as a credit broker not a lender. We work with a<br />
            number of carefully selected credit providers who may be able to offer you finance<br />
            for your purchase. We are only able to offer finance products from these providers.
          </Copyright>
          <Follow>
            Follow Us
            {socials.map(([name, Icon]) => (
              <Social key={name} href="#" aria-label={name}><Icon size={25} /></Social>
            ))}
          </Follow>
        </Legal>
      </Footer>

      <ToTop href="#" aria-label="Back to top">
        <svg width="22" height="12" viewBox="0 0 22 12" fill="none" stroke={coral} strokeWidth="4"><path d="M2 11L11 3L20 11" /></svg>
      </ToTop>
    </Page>
  );
}
